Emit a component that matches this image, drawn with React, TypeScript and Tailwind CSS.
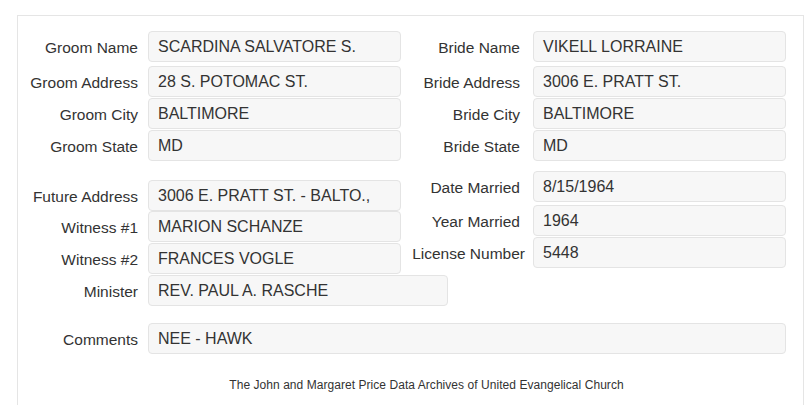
import React from "react";

const box =
  "h-[31px] flex items-center pl-[9px] pr-[10px] pt-[1px] bg-[#f7f7f7] border border-[#e4e4e4] rounded-[4px] text-[16px] text-[#333] whitespace-nowrap overflow-hidden";

function Row({
  label,
  value,
  labelW,
  gap,
  boxW,
  mt,
}: {
  label: string;
  value: string;
  labelW: string;
  gap: string;
  boxW: string;
  mt: string;
}) {
  return (
    <div className={`flex items-center ${mt}`}>
      <div className={`${labelW} shrink-0 text-right text-[15.5px] text-[#333] whitespace-nowrap pt-[3px]`}>
        <span className="inline-block">{label}</span>
      </div>
      <div className={`${gap} shrink-0`} />
      <div className={`${box} ${boxW} shrink-0`}>{value}</div>
    </div>
  );
}

export default function App() {
  return (
    <div
      className="w-[805px] h-[405px] overflow-hidden bg-white"
      style={{ fontFamily: '"Liberation Sans", Arial, sans-serif' }}
    >
      <div className="ml-[17px] mt-[15px] w-[787px] h-[420px] border border-b-0 border-[#e5e5e5] pt-[15px]">
        {/* Top section */}
        <div className="flex">
          <div className="flex flex-col">
            <Row label="Groom Name" value="SCARDINA SALVATORE S." labelW="w-[120px]" gap="w-[10px]" boxW="w-[253px]" mt="" />
            <Row label="Groom Address" value="28 S. POTOMAC ST." labelW="w-[120px]" gap="w-[10px]" boxW="w-[253px]" mt="mt-[4px]" />
            <Row label="Groom City" value="BALTIMORE" labelW="w-[120px]" gap="w-[10px]" boxW="w-[253px]" mt="mt-[1px]" />
            <Row label="Groom State" value="MD" labelW="w-[120px]" gap="w-[10px]" boxW="w-[253px]" mt="mt-[1px]" />
          </div>
          <div className="flex flex-col">
            <Row label="Bride Name" value="VIKELL LORRAINE" labelW="w-[119px]" gap="w-[13px]" boxW="w-[253px]" mt="" />
            <Row label="Bride Address" value="3006 E. PRATT ST." labelW="w-[119px]" gap="w-[13px]" boxW="w-[253px]" mt="mt-[4px]" />
            <Row label="Bride City" value="BALTIMORE" labelW="w-[119px]" gap="w-[13px]" boxW="w-[253px]" mt="mt-[1px]" />
            <Row label="Bride State" value="MD" labelW="w-[119px]" gap="w-[13px]" boxW="w-[253px]" mt="mt-[1px]" />
          </div>
        </div>

        {/* Lower section */}
        <div className="flex">
          <div className="flex flex-col pt-[19px]">
            <Row label="Future Address" value="3006 E. PRATT ST. - BALTO.," labelW="w-[120px]" gap="w-[10px]" boxW="w-[253px]" mt="" />
            <Row label="Witness #1" value="MARION SCHANZE" labelW="w-[120px]" gap="w-[10px]" boxW="w-[253px]" mt="" />
            <Row label="Witness #2" value="FRANCES VOGLE" labelW="w-[120px]" gap="w-[10px]" boxW="w-[253px]" mt="mt-[1px]" />
            <Row label="Minister" value="REV. PAUL A. RASCHE" labelW="w-[120px]" gap="w-[10px]" boxW="w-[300px]" mt="mt-[1px]" />
          </div>
          <div className="flex flex-col pt-[10px] -ml-[47px]">
            <Row label="Date Married" value="8/15/1964" labelW="w-[119px]" gap="w-[13px]" boxW="w-[253px]" mt="" />
            <Row label="Year Married" value="1964" labelW="w-[119px]" gap="w-[13px]" boxW="w-[253px]" mt="mt-[3px]" />
            <Row label="License Number" value="5448" labelW="w-[124px]" gap="w-[8px]" boxW="w-[253px]" mt="mt-[1px]" />
          </div>
        </div>

        {/* Comments */}
        <div className="mt-[17px]">
          <Row label="Comments" value="NEE - HAWK" labelW="w-[120px]" gap="w-[10px]" boxW="w-[638px]" mt="" />
        </div>

        <div className="mt-[23px] pl-[32px] text-center text-[12px] leading-[16px] tracking-[0.05px] text-[#333]">
          The John and Margaret Price Data Archives of United Evangelical Church
        </div>
      </div>
    </div>
  );
}
